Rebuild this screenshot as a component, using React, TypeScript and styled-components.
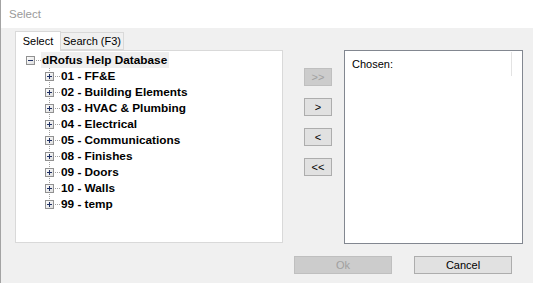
import styled, { createGlobalStyle } from "styled-components";

const GlobalStyle = createGlobalStyle`
    html, body {
        margin: 0;
        padding: 0;
        background: #f0f0f0;
    }
    * {
        box-sizing: border-box;
    }
`;

const font = `"Liberation Sans", Arial, sans-serif`;

export const Window = styled.div`
    width: 533px;
    height: 283px;
    background: #f0f0f0;
    border-left: 1px solid #a3a3a3;
    font-family: ${font};
    font-size: 11px;
    color: #000;
    display: flex;
    flex-direction: column;
    overflow: hidden;
`;

export const TitleBar = styled.div`
    height: 28px;
    background: #fff;
    display: flex;
    align-items: center;
    padding-left: 8px;
    color: #9a9a9a;
    font-size: 11.5px;
    padding-bottom: 1px;
`;

export const Main = styled.div`
    display: flex;
    align-items: flex-start;
    padding: 3px 0 0 14px;
`;

export const LeftColumn = styled.div`
    width: 268px;
    display: flex;
    flex-direction: column;
`;

export const TabStrip = styled.div`
    display: flex;
    align-items: flex-end;
    height: 19px;
    position: relative;
    z-index: 1;
`;

export const Tab = styled.div<{ $active?: boolean; $w: number }>`
    width: ${(p) => p.$w}px;
    height: ${(p) => (p.$active ? "20px" : "18px")};
    margin-bottom: ${(p) => (p.$active ? "-1px" : "0")};
    background: ${(p) => (p.$active ? "#fff" : "#f0f0f0")};
    border: 1px solid #d9d9d9;
    border-bottom: ${(p) => (p.$active ? "none" : "1px solid #d9d9d9")};
    border-left: ${(p) => (p.$active ? "1px solid #d9d9d9" : "none")};
    display: flex;
    align-items: center;
    justify-content: center;
    font-size: 11px;
    white-space: nowrap;
    padding-bottom: ${(p) => (p.$active ? "2px" : "1px")};
`;

export const TabPanel = styled.div`
    height: 193px;
    background: #fff;
    border: 1px solid #d9d9d9;
    padding-top: 1px;
`;

export const Tree = styled.div`
    font-family: ${font};
    font-weight: bold;
    font-size: 11.8px;
    display: flex;
    flex-direction: column;
`;

export const TreeRow = styled.div<{ $level: number }>`
    height: 16px;
    display: flex;
    align-items: center;
    padding-left: ${(p) => 10 + p.$level * 19}px;
`;

export const Connector = styled.span`
    width: 5px;
    height: 1px;
    background: repeating-linear-gradient(to right, #a0a0a0 0 1px, transparent 1px 2px);
    margin-left: 1px;
`;

export const Label = styled.span<{ $selected?: boolean }>`
    height: 16px;
    line-height: 16px;
    padding: 0 2px 0 1px;
    background: ${(p) => (p.$selected ? "#efefef" : "transparent")};
    white-space: nowrap;
`;

export const Children = styled.div`
    position: relative;
    display: flex;
    flex-direction: column;

    &::before {
        content: "";
        position: absolute;
        left: 33px;
        top: 0;
        bottom: 8px;
        width: 1px;
        background: repeating-linear-gradient(to bottom, #a0a0a0 0 1px, transparent 1px 2px);
    }
`;

const BoxSvg = styled.svg`
    display: block;
    flex: none;
    position: relative;
`;

function ExpandBox(props: { open?: boolean }) {
    return (
        <BoxSvg width="9" height="9" viewBox="0 0 9 9">
            <defs>
                <linearGradient id="bx" x1="0" y1="0" x2="1" y2="1">
                    <stop offset="0" stopColor="#ffffff" />
                    <stop offset="1" stopColor="#dcdcdc" />
                </linearGradient>
            </defs>
            <rect x="0.5" y="0.5" width="8" height="8" fill="url(#bx)" stroke="#919191" />
            <path d="M2 4.5h5" stroke="#1e2f63" strokeWidth="1" />
            {!props.open && <path d="M4.5 2v5" stroke="#1e2f63" strokeWidth="1" />}
        </BoxSvg>
    );
}

export const MiddleColumn = styled.div`
    width: 61px;
    padding: 37px 0 0 21px;
    display: flex;
    flex-direction: column;
    gap: 12px;
`;

export const Button = styled.button<{ $w: number }>`
    width: ${(p) => p.$w}px;
    height: 18px;
    padding: 0;
    margin: 0;
    font-family: ${font};
    font-size: 11px;
    line-height: 16px;
    border: 1px solid ${(p) => (p.disabled ? "#bfbfbf" : "#adadad")};
    background: ${(p) => (p.disabled ? "#cccccc" : "#e1e1e1")};
    color: ${(p) => (p.disabled ? "#a0a0a0" : "#000")};
    display: flex;
    align-items: center;
    justify-content: center;
`;

export const ListBox = styled.div`
    width: 179px;
    height: 194px;
    margin-top: 19px;
    background: #fff;
    border: 1px solid #828790;
    padding-top: 1px;
`;

export const ListHeader = styled.div`
    width: 167px;
    height: 24px;
    border-right: 1px solid #e3e3e3;
    display: flex;
    align-items: center;
    padding: 0 0 1px 7px;
    font-size: 11px;
`;

export const Footer = styled.div`
    display: flex;
    justify-content: flex-end;
    gap: 22px;
    padding-right: 21px;
    margin-top: 12px;
`;

const items = [
    "01 - FF&E",
    "02 - Building Elements",
    "03 - HVAC & Plumbing",
    "04 - Electrical",
    "05 - Communications",
    "08 - Finishes",
    "09 - Doors",
    "10 - Walls",
    "99 - temp",
];

export default function App() {
    return (
        <>
            <GlobalStyle />
            <Window>
                <TitleBar>Select</TitleBar>
                <Main>
                    <LeftColumn>
                        <TabStrip>
                            <Tab $active $w={46}>Select</Tab>
                            <Tab $w={63}>Search (F3)</Tab>
                        </TabStrip>
                        <TabPanel>
                            <Tree>
                                <TreeRow $level={0}>
                                    <ExpandBox open />
                                    <Connector />
                                    <Label $selected>dRofus Help Database</Label>
                                </TreeRow>
                                <Children>
                                    {items.map((item) => (
                                        <TreeRow $level={1} key={item}>
                                            <ExpandBox />
                                            <Connector />
                                            <Label>{item}</Label>
                                        </TreeRow>
                                    ))}
                                </Children>
                            </Tree>
                        </TabPanel>
                    </LeftColumn>
                    <MiddleColumn>
                        <Button $w={28} disabled>&gt;&gt;</Button>
                        <Button $w={28}>&gt;</Button>
                        <Button $w={28}>&lt;</Button>
                        <Button $w={28}>&lt;&lt;</Button>
                    </MiddleColumn>
                    <ListBox>
                        <ListHeader>Chosen:</ListHeader>
                    </ListBox>
                </Main>
                <Footer>
                    <Button $w={98} disabled>Ok</Button>
                    <Button $w={98}>Cancel</Button>
                </Footer>
            </Window>
        </>
    );
}
